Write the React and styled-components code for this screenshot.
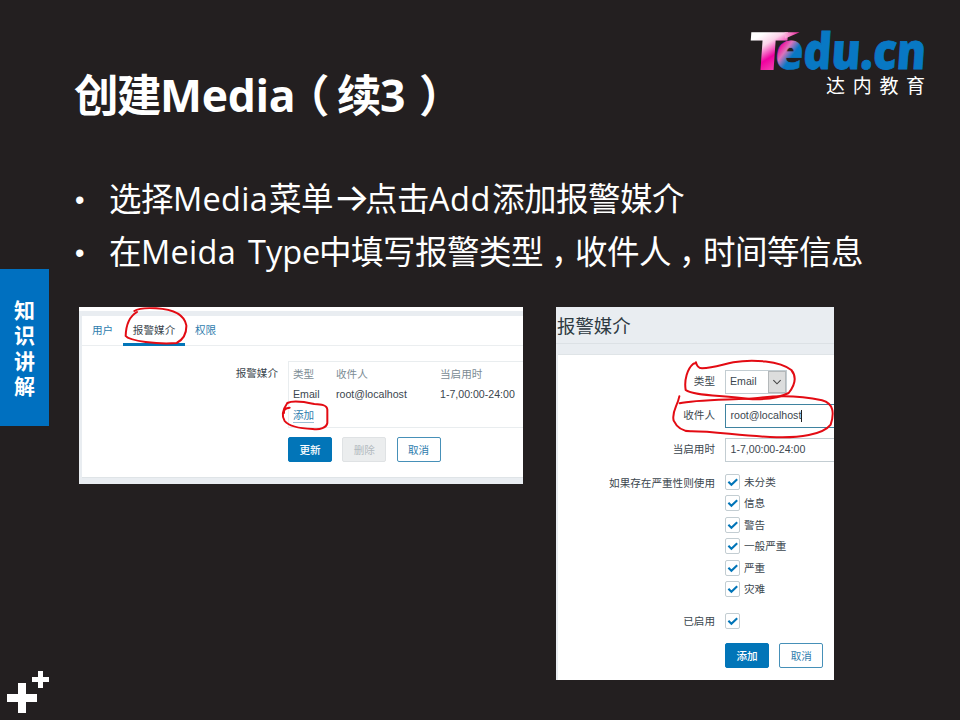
import React from "react";
import styled, { createGlobalStyle } from "styled-components";

const cjk = '"Noto Sans CJK SC", sans-serif';

const GlobalStyle = createGlobalStyle`
  * { box-sizing: border-box; }
  html, body { margin: 0; padding: 0; background: #231f20; }
  ul { list-style: none; margin: 0; padding: 0; }
`;

const Slide = styled.div`
  display: grid;
  grid-template-columns: 49px 1fr;
  width: 960px;
  height: 720px;
  overflow: hidden;
  background: #231f20;
  color: #fff;
  font-family: "Open Sans", ${cjk};
`;

const Rail = styled.aside`
  display: flex;
  flex-direction: column;
  justify-content: space-between;
  padding: 269px 0 7px;
`;

const ChapterTab = styled.div`
  display: flex;
  flex-direction: column;
  align-items: center;
  height: 157px;
  padding-top: 27.5px;
  background: #0070c0;
  font: 700 21px/25.5px ${cjk};
`;

const PlusMark = styled.svg`
  display: block;
  width: 49px;
  height: 43px;
`;

const Main = styled.main`
  display: flex;
  flex-direction: column;
  min-width: 0;
`;

const Header = styled.header`
  display: flex;
  justify-content: space-between;
  height: 172px;
  padding: 0 31px 0 25px;
`;

const Title = styled.h1`
  display: flex;
  height: 60px;
  margin: 65px 0 0;
  font-size: 44.5px;
  font-weight: 700;
  line-height: 60px;
`;

const Run = styled.span`
  flex: none;
  width: ${(p) => p.$w}px;
  padding-left: ${(p) => p.$pad || 0}px;
  margin-left: ${(p) => p.$pull || 0}px;
  letter-spacing: ${(p) => p.$ls || 0}px;
  white-space: pre;
`;

const Arrow = styled(Run)`
  font: 400 39px/46px Inter, sans-serif;
`;

const Logo = styled.svg`
  display: block;
  width: 184px;
  height: 76px;
  margin-top: 26px;
  overflow: visible;
`;

const Bullets = styled.ul`
  display: flex;
  flex-direction: column;
  gap: 4px;
  height: 135px;
  padding: 2px 0 0 26px;
`;

const Bullet = styled.li`
  display: flex;
  height: 49px;
  font-size: 32.5px;
  line-height: 49px;
`;

const Dot = styled.span`
  width: 34px;
  font: 27px/53px "Liberation Sans", sans-serif;
`;

const Shots = styled.section`
  display: flex;
  align-items: flex-start;
  gap: 33px;
  padding-left: 30px;
`;

const Shot = styled.div`
  position: relative;
  flex: none;
  overflow: hidden;
  width: ${(p) => p.$w}px;
  height: ${(p) => p.$h}px;
  background: #e9edf1;
  color: #3b464e;
  font: 10.6px/16px "Liberation Sans", ${cjk};
  white-space: nowrap;
`;

const TopStrip = styled.div`
  height: 4px;
  background: #fff;
`;

const UserCard = styled.div`
  height: 162px;
  margin: 5px 0 0 3px;
  background: #fff;
  border-bottom: 1px solid #dfe4e7;
`;

const Tabs = styled.nav`
  display: flex;
  height: 30px;
  border-bottom: 1px solid #ebeef0;
`;

const Tab = styled.div`
  height: 30px;
  padding: 6px 9.9px 0;
  color: ${(p) => (p.$active ? "#39454d" : "#2e7cad")};
  border-bottom: 3px solid ${(p) => (p.$active ? "#0275b8" : "transparent")};
`;

const MediaRow = styled.div`
  display: grid;
  grid-template-columns: 196px 1fr;
  column-gap: 10px;
  padding-top: 15px;
`;

const FieldLabel = styled.label`
  text-align: right;
  padding-top: ${(p) => p.$top || 0}px;
`;

const MediaTable = styled.div`
  display: grid;
  grid-template-columns: 43px 104px 1fr;
  grid-template-rows: 22px 20px 22px;
  align-items: center;
  height: 67px;
  padding-left: 4px;
  border: 1px solid #e9edef;
  border-right: 0;
`;

const HeadCell = styled.span`
  padding-top: 1px;
  color: #7b8b94;
`;

const AddLink = styled.a`
  justify-self: start;
  height: 15px;
  line-height: 14px;
  color: #2e7cad;
  border-bottom: 1px solid #9bbfd5;
`;

const Buttons = styled.div`
  display: flex;
  gap: 10.3px;
  padding: ${(p) => p.$pad};
`;

const tones = {
  primary: ["#0275b8", "#0275b8", "#fff"],
  disabled: ["#ebedee", "#dfe2e4", "#b3babf"],
  outline: ["#fff", "#4690b8", "#2e7cad"],
};

const Button = styled.button`
  width: 44px;
  height: 25px;
  padding: 0;
  border: 1px solid ${(p) => tones[p.$tone][1]};
  border-radius: 2px;
  background: ${(p) => tones[p.$tone][0]};
  color: ${(p) => tones[p.$tone][2]};
  font: ${(p) => (p.$tone === "primary" ? 500 : 400)} 10.6px/22px ${cjk};
`;

const ShotTitle = styled.h2`
  height: 37px;
  margin: 0;
  padding-left: 1px;
  border-bottom: 1px solid #dce1e5;
  color: #2e3a42;
  font: 400 18.4px/37px ${cjk};
`;

const FormCard = styled.div`
  height: 327px;
  margin: 10px 0 0 2px;
  padding-top: 15px;
  background: #fff;
  border-top: 1px solid #dfe4e7;
`;

const FormRow = styled.div`
  display: grid;
  grid-template-columns: 157px 1fr;
  column-gap: 10px;
  min-height: ${(p) => p.$h}px;
  line-height: ${(p) => p.$lh || 16}px;
`;

const Input = styled.div`
  height: 24px;
  padding-left: 4.5px;
  line-height: 21px;
  border: 1px solid ${(p) => (p.$focus ? "#3f83a0" : "#c3cdd2")};
  border-right: 0;
`;

const Caret = styled.span`
  display: inline-block;
  width: 1px;
  height: 12px;
  vertical-align: -3px;
  background: #222;
`;

const Select = styled.div`
  display: flex;
  justify-content: space-between;
  width: 62px;
  height: 24px;
  padding-left: 4px;
  line-height: 21px;
  border: 1px solid #c3cdd2;
`;

const SelectArrow = styled.svg`
  width: 18px;
  height: 22px;
  background: #dcdddd;
  border: 1px solid #b4b8ba;
`;

const Checks = styled.div`
  display: flex;
  flex-direction: column;
  gap: 5.4px;
`;

const Check = styled.div`
  display: flex;
  align-items: center;
  gap: 4px;
  height: 16px;
`;

const Box = styled.svg`
  width: 15px;
  height: 16px;
  border: 1px solid #c3cdd2;
  border-radius: 2px;
`;

const Ink = styled.svg`
  position: absolute;
  inset: 0;
  width: 100%;
  height: 100%;
  fill: none;
  stroke: #e30b13;
  stroke-width: 6;
  stroke-linecap: round;
  stroke-linejoin: round;
`;

const CheckItem = ({ children }) => (
  <Check>
    <Box viewBox="0 0 13 14">
      <path d="M2.4 6.8 L5.4 9.8 L11.2 4.2" fill="none" stroke="#0275b8" strokeWidth="2.1" />
    </Box>
    {children && <span>{children}</span>}
  </Check>
);

const TeduLogo = () => (
  <Logo viewBox="745 26 184 76">
    <defs>
      <linearGradient id="tee" gradientUnits="userSpaceOnUse" x1="757" y1="36" x2="777" y2="66">
        <stop offset="0" stopColor="#fff" />
        <stop offset="0.3" stopColor="#fbd3ea" />
        <stop offset="0.68" stopColor="#f000a0" />
        <stop offset="1" stopColor="#f43caf" />
      </linearGradient>
      <linearGradient id="tip" x1="0" y1="0" x2="1" y2="0">
        <stop offset="0" stopColor="#f9b8dd" />
        <stop offset="1" stopColor="#ec1c99" />
      </linearGradient>
      <linearGradient id="ee" gradientUnits="userSpaceOnUse" x1="777" y1="50" x2="798" y2="64">
        <stop offset="0" stopColor="#ed1c9d" />
        <stop offset="0.25" stopColor="#dc73bb" />
        <stop offset="0.6" stopColor="#0878c4" />
      </linearGradient>
    </defs>
    <g fontFamily="Open Sans" fontWeight="800" transform="translate(0 70) skewX(-4) translate(0 -70)">
      <text x="747" y="70" fontSize="53" textLength="40" lengthAdjust="spacingAndGlyphs" fill="url(#tee)">T</text>
      <path d="M782 32.2 H797 L783 38.5 Z" fill="url(#tip)" />
      <text x="774.5" y="69.5" fontSize="50" textLength="28" lengthAdjust="spacingAndGlyphs" fill="url(#ee)" stroke="url(#ee)" strokeWidth="0.6">e</text>
      <text x="802.5" y="69.5" fontSize="50" textLength="122.5" lengthAdjust="spacingAndGlyphs" fill="#0878c4" stroke="#0878c4" strokeWidth="0.8">du.cn</text>
    </g>
    <text x="826" y="92.5" fontFamily="Noto Sans CJK SC" fontSize="19" letterSpacing="7.7" fill="#fff">达内教育</text>
  </Logo>
);

export default function App() {
  return (
    <>
      <GlobalStyle />
      <Slide>
        <Rail>
          <ChapterTab>
            {[..."知识讲解"].map((c) => <span key={c}>{c}</span>)}
          </ChapterTab>
          <PlusMark viewBox="0 670 49 43">
            <path d="M18 683h8v11h11v8h-11v11h-8v-11h-11v-8h11zM38 671h5v6h6v5h-6v6h-5v-6h-6v-5h6z" fill="#fff" />
          </PlusMark>
        </Rail>
        <Main>
          <Header>
            <Title>
              <Run $w={86} $ls={-1.5}>创建</Run>
              <Run $w={134} $ls={-0.3}>Media</Run>
              <Run $w={43} $pull={-9}>（</Run>
              <Run $w={43} $pull={9}>续</Run>
              <Run $w={25}>3</Run>
              <Run $w={57} $pad={14}>）</Run>
            </Title>
            <TeduLogo />
          </Header>
          <Bullets>
            <Bullet>
              <Dot>•</Dot>
              <Run $w={64} $ls={-0.5}>选择</Run>
              <Run $w={96} $ls={0.3}>Media</Run>
              <Run $w={64} $ls={-0.5}>菜单</Run>
              <Arrow $w={32}>→</Arrow>
              <Run $w={64} $ls={-0.5}>点击</Run>
              <Run $w={63} $ls={0.5}>Add</Run>
              <Run $w={192} $ls={-0.5}>添加报警媒介</Run>
            </Bullet>
            <Bullet>
              <Dot>•</Dot>
              <Run $w={32}>在</Run>
              <Run $w={107} $ls={0.3}>Meida </Run>
              <Run $w={71}>Type</Run>
              <Run $w={224} $ls={-0.5}>中填写报警类型</Run>
              <Run $w={32} $pad={8}>，</Run>
              <Run $w={96} $ls={-0.5}>收件人</Run>
              <Run $w={32} $pad={8}>，</Run>
              <Run $w={160} $ls={-0.5}>时间等信息</Run>
            </Bullet>
          </Bullets>
          <Shots>
            <Shot $w={444} $h={177}>
              <TopStrip />
              <UserCard>
                <Tabs>
                  <Tab>用户</Tab>
                  <Tab $active>报警媒介</Tab>
                  <Tab>权限</Tab>
                </Tabs>
                <MediaRow>
                  <FieldLabel $top={4}>报警媒介</FieldLabel>
                  <MediaTable>
                    <HeadCell>类型</HeadCell>
                    <HeadCell>收件人</HeadCell>
                    <HeadCell>当启用时</HeadCell>
                    <span>Email</span>
                    <span>root@localhost</span>
                    <span>1-7,00:00-24:00</span>
                    <AddLink>添加</AddLink>
                  </MediaTable>
                </MediaRow>
                <Buttons $pad="9px 0 0 206px">
                  <Button $tone="primary">更新</Button>
                  <Button $tone="disabled">删除</Button>
                  <Button $tone="outline">取消</Button>
                </Buttons>
              </UserCard>
              <Ink viewBox="12 21 1332 531">
                <path d="M186 36 C165 48 153 75 152 108 C163 123 250 134 305 129 C324 119 335 103 334 76 C328 45 293 28 243 25 C210 23 187 27 178 33" />
                <path d="M644 323 C632 324 625 329 627 339 M637 309 C623 329 620 349 629 363 C640 377 663 385 713 387 C735 391 755 382 757 369 L757 329 C756 314 738 313 718 312 C690 306 655 300 637 309" />
              </Ink>
            </Shot>
            <Shot $w={278} $h={373}>
              <ShotTitle>报警媒介</ShotTitle>
              <FormCard>
                <FormRow $h={34} $lh={23}>
                  <FieldLabel>类型</FieldLabel>
                  <Select>
                    <span>Email</span>
                    <SelectArrow viewBox="0 0 17 22">
                      <path d="M4.5 9 L8.5 13 L12.5 9" fill="none" stroke="#444" strokeWidth="1.2" />
                    </SelectArrow>
                  </Select>
                </FormRow>
                <FormRow $h={34} $lh={23}>
                  <FieldLabel>收件人</FieldLabel>
                  <Input $focus>root@localhost<Caret /></Input>
                </FormRow>
                <FormRow $h={36} $lh={23}>
                  <FieldLabel>当启用时</FieldLabel>
                  <Input>1-7,00:00-24:00</Input>
                </FormRow>
                <FormRow $h={139}>
                  <FieldLabel $top={1}>如果存在严重性则使用</FieldLabel>
                  <Checks>
                    {["未分类", "信息", "警告", "一般严重", "严重", "灾难"].map((s) => (
                      <CheckItem key={s}>{s}</CheckItem>
                    ))}
                  </Checks>
                </FormRow>
                <FormRow $h={16}>
                  <FieldLabel>已启用</FieldLabel>
                  <CheckItem />
                </FormRow>
                <Buttons $pad="14px 0 0 167px">
                  <Button $tone="primary">添加</Button>
                  <Button $tone="outline">取消</Button>
                </Buttons>
              </FormCard>
              <Ink viewBox="18 21 834 1119">
                <path d="M438 187 C440 198 446 204 456 205 C490 203 515 194 550 187 C610 176 690 184 724 210 C741 231 735 255 716 279 C685 295 640 299 597 297 C520 285 430 288 407 270 C402 240 412 206 430 191 L438 189" />
                <path d="M388 289 C382 320 364 335 371 362 C382 385 400 395 425 394 C490 394 560 406 660 411 C750 416 820 403 842 374 C853 340 852 311 816 301 C760 289 690 286 630 293 C570 300 435 297 389 310" />
              </Ink>
            </Shot>
          </Shots>
        </Main>
      </Slide>
    </>
  );
}
